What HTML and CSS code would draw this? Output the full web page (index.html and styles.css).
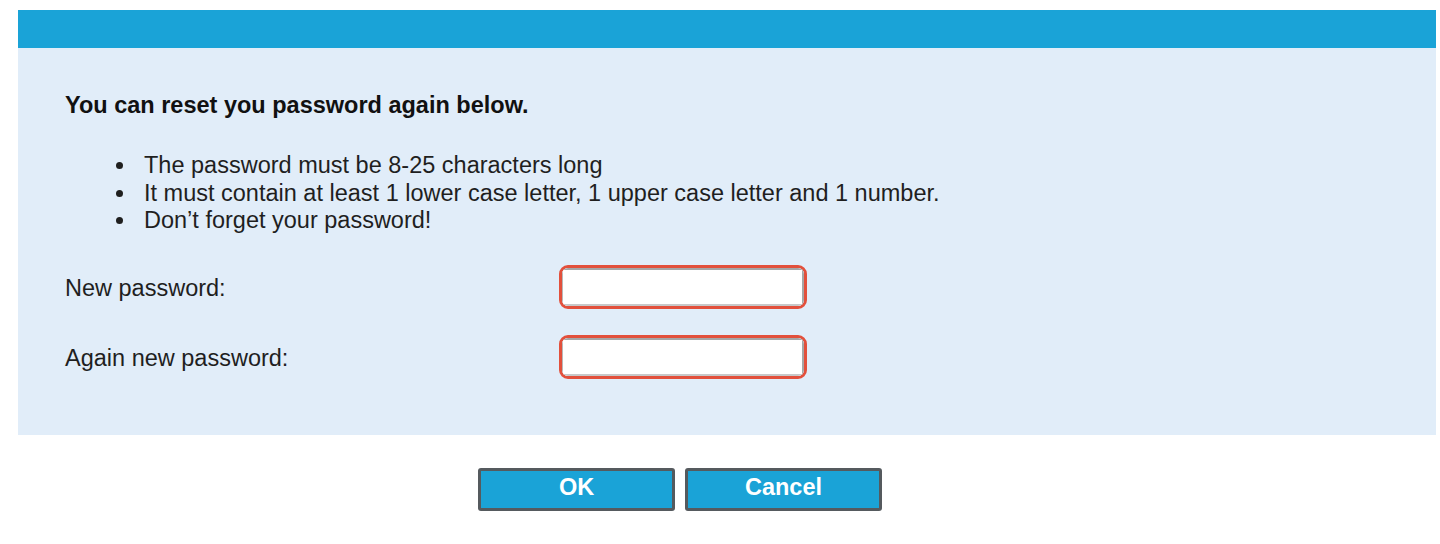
FILE: index.html
```html
<!DOCTYPE html>
<html>
<head>
<meta charset="utf-8">
<link rel="stylesheet" href="styles.css">
</head>
<body>
<div class="page">
  <div class="dialog">
    <div class="titlebar"></div>
    <div class="panel">
      <h1 class="heading">You can reset you password again below.</h1>
      <ul class="rules">
        <li>The password must be 8-25 characters long</li>
        <li>It must contain at least 1 lower case letter, 1 upper case letter and 1 number.</li>
        <li>Don’t forget your password!</li>
      </ul>
      <div class="form">
        <div class="row">
          <label class="label">New password:</label>
          <div class="field"><input class="input" type="password"></div>
        </div>
        <div class="row">
          <label class="label">Again new password:</label>
          <div class="field"><input class="input" type="password"></div>
        </div>
      </div>
    </div>
  </div>
  <div class="actions">
    <button class="btn">OK</button>
    <button class="btn">Cancel</button>
  </div>
</div>
</body>
</html>
```

FILE: styles.css
```css
* { box-sizing: border-box; }
html, body { margin: 0; padding: 0; background: #fff; }
body {
  font-family: "Liberation Sans", Arial, sans-serif;
  color: #1f1f1f;
}
.page {
  padding: 10px 4px 0 18px;
}
.dialog {
  width: 1418px;
}
.titlebar {
  height: 38px;
  background: #1aa3d7;
}
.panel {
  background: #e1edf9;
  height: 387px;
  padding: 43px 0 0 47px;
}
.heading {
  margin: 0;
  font-size: 23.5px;
  font-weight: bold;
  line-height: 28px;
  color: #111;
}
.rules {
  margin: 33px 0 0 0;
  padding: 0 0 0 72px;
  font-size: 23.5px;
  line-height: 27.5px;
}
.rules li {
  padding-left: 7px;
}
.form {
  margin-top: 30px;
  display: flex;
  flex-direction: column;
  gap: 26px;
}
.row {
  display: flex;
  align-items: center;
  height: 44px;
}
.label {
  width: 494px;
  font-size: 23.5px;
  padding-top: 3px;
}
.field {
  width: 248px;
  height: 44px;
  border: 3px solid #e2503c;
  border-radius: 9px;
  background: #fff;
  overflow: hidden;
}
.input {
  display: block;
  width: 100%;
  height: 100%;
  border: none;
  border-top: 2px solid #a6a6a6;
  border-left: 1px solid #b8b8b8;
  border-right: 2px solid #a6a6a6;
  border-bottom: 2px solid #c8c8c8;
  background: #fff;
  outline: none;
}
.actions {
  display: flex;
  gap: 10px;
  padding: 33px 0 0 460px;
}
.btn {
  width: 197px;
  height: 43px;
  background: #1aa3d7;
  border: 3px solid #555a5e;
  border-radius: 3px;
  color: #fff;
  font-family: "Liberation Sans", Arial, sans-serif;
  font-weight: bold;
  font-size: 23.5px;
  padding: 0 0 4px 0;
}
```
